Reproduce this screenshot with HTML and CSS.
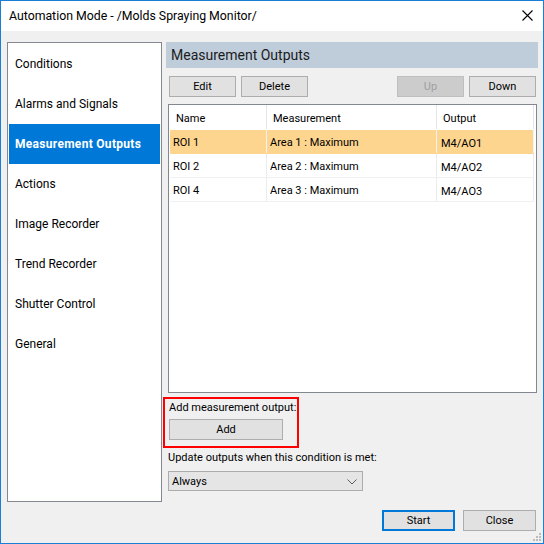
FILE: index.html
```html
<!DOCTYPE html>
<html>
<head>
<meta charset="utf-8">
<link rel="stylesheet" href="styles.css">
</head>
<body>
<div class="window">
  <div class="titlebar">
    <span class="title">Automation Mode - /Molds Spraying Monitor/</span>
    <svg class="close-x" width="11" height="11" viewBox="0 0 11 11"><path d="M0.5 0.5 L10.5 10.5 M10.5 0.5 L0.5 10.5" stroke="#000" stroke-width="1.1" fill="none"/></svg>
  </div>
  <div class="client">
    <div class="main">
      <ul class="nav">
        <li class="nav-item">Conditions</li>
        <li class="nav-item">Alarms and Signals</li>
        <li class="nav-item active">Measurement Outputs</li>
        <li class="nav-item">Actions</li>
        <li class="nav-item">Image Recorder</li>
        <li class="nav-item">Trend Recorder</li>
        <li class="nav-item">Shutter Control</li>
        <li class="nav-item">General</li>
      </ul>
      <div class="content">
        <div class="header">Measurement Outputs</div>
        <div class="toolbar">
          <button class="btn">Edit</button>
          <button class="btn">Delete</button>
          <span class="spacer"></span>
          <button class="btn disabled">Up</button>
          <button class="btn">Down</button>
        </div>
        <div class="table">
          <div class="row head">
            <div class="cell c1">Name</div>
            <div class="cell c2">Measurement</div>
            <div class="cell c3">Output</div>
          </div>
          <div class="row sel">
            <div class="cell c1">ROI 1</div>
            <div class="cell c2">Area 1 : Maximum</div>
            <div class="cell c3"><span class="out">M4/AO1</span></div>
          </div>
          <div class="row">
            <div class="cell c1">ROI 2</div>
            <div class="cell c2">Area 2 : Maximum</div>
            <div class="cell c3"><span class="out">M4/AO2</span></div>
          </div>
          <div class="row">
            <div class="cell c1">ROI 4</div>
            <div class="cell c2">Area 3 : Maximum</div>
            <div class="cell c3"><span class="out">M4/AO3</span></div>
          </div>
        </div>
        <div class="addbox">
          <div class="label">Add measurement output:</div>
          <button class="btn add">Add</button>
        </div>
        <div class="label update">Update outputs when this condition is met:</div>
        <div class="select">
          <span>Always</span>
          <svg width="10" height="6" viewBox="0 0 10 6"><path d="M0.5 0.5 L5 5 L9.5 0.5" stroke="#606060" stroke-width="1" fill="none"/></svg>
        </div>
      </div>
    </div>
    <div class="footer">
      <button class="btn fbtn primary">Start</button>
      <button class="btn fbtn">Close</button>
    </div>
  </div>
  <svg class="grip" width="9" height="9" viewBox="0 0 9 9">
    <rect x="7" y="1" width="2" height="2" fill="#bcbcbc"/>
    <rect x="4" y="4" width="2" height="2" fill="#bcbcbc"/>
    <rect x="7" y="4" width="2" height="2" fill="#bcbcbc"/>
    <rect x="1" y="7" width="2" height="2" fill="#bcbcbc"/>
    <rect x="4" y="7" width="2" height="2" fill="#bcbcbc"/>
    <rect x="7" y="7" width="2" height="2" fill="#bcbcbc"/>
  </svg>
</div>
</body>
</html>
```
FILE: styles.css
```css
* { box-sizing: border-box; }
html, body { margin: 0; padding: 0; }
body {
  width: 544px;
  height: 544px;
  font-family: Roboto, "Noto Sans", sans-serif;
  font-size: 11px;
  color: #000;
  overflow: hidden;
}
.window {
  position: relative;
  width: 544px;
  height: 544px;
  border: 1px solid #1a7fd4;
  background: #f0f0f0;
  display: flex;
  flex-direction: column;
}
.titlebar {
  height: 30px;
  background: #fff;
  display: flex;
  align-items: center;
  padding-left: 8px;
  position: relative;
}
.title {
  font-size: 12.3px;
  line-height: 16px;
}
.close-x {
  position: absolute;
  left: 521px;
  top: 9px;
}
.client {
  flex: 1;
  padding: 11px 5px 0 6px;
  display: flex;
  flex-direction: column;
}
.main {
  display: flex;
  gap: 1px;
  height: 460px;
}
.nav {
  list-style: none;
  margin: 0;
  padding: 1px;
  width: 155px;
  height: 460px;
  background: #fff;
  border: 1px solid #828790;
}
.nav-item {
  height: 40px;
  line-height: 40px;
  padding-left: 6px;
  white-space: nowrap;
  font-size: 12px;
}
.nav-item.active {
  background: #0078d7;
  color: #fff;
  font-weight: bold;
  letter-spacing: 0.3px;
}
.content {
  flex: 1;
  display: flex;
  flex-direction: column;
  align-items: flex-start;
}
.header {
  margin-left: 3px;
  align-self: stretch;
  height: 26px;
  background: #bfcddb;
  font-size: 14px;
  line-height: 26px;
  padding-left: 5px;
  color: #1b1b1b;
}
.toolbar {
  margin-top: 8px;
  margin-left: 6px;
  margin-right: 2px;
  align-self: stretch;
  display: flex;
  gap: 5px;
}
.spacer { flex: 1; }
.btn {
  font-family: inherit;
  font-size: 11px;
  color: #000;
  width: 67px;
  height: 21px;
  padding: 1px 0 0;
  background: #e1e1e1;
  border: 1px solid #adadad;
  border-radius: 0;
  line-height: 18px;
}
.btn.disabled {
  background: #cccccc;
  border-color: #bfbfbf;
  color: #a0a0a0;
}
.table {
  margin-top: 7px;
  margin-left: 5px;
  width: 369px;
  height: 289px;
  background: #fff;
  border: 1px solid #828790;
  padding: 0 1px;
}
.row {
  display: flex;
  height: 24px;
  border-bottom: 1px solid #f0f0f0;
  width: 364px;
}
.row.head {
  height: 25px;
  border-bottom: 1px solid #fff;
}
.row.sel { background: #fdd58f; border-bottom-color: #fdd58f; }
.cell {
  line-height: 23px;
  padding-top: 1px;
  padding-left: 3px;
  border-right: 1px solid #ececec;
  white-space: nowrap;
  overflow: hidden;
}
.row.sel .cell { border-right-color: #f2f2f2; }
.row.head .cell { padding-left: 6px; line-height: 25px; border-right-color: #e5e5e5; }
.c1 { width: 97px; }
.c2 { width: 170px; }
.c3 { width: 97px; padding-left: 4px; }
.row.head .c2 { padding-left: 6px; }
.row .c2 { padding-left: 3px; }
.out { position: relative; top: 1px; }
.addbox {
  margin-top: 4px;
  width: 136px;
  height: 51px;
  border: 2px solid #ff0000;
  padding: 1px 0 0 4px;
}
.label {
  line-height: 15px;
  white-space: nowrap;
}
.addbox .label { margin-left: 0; }
.btn.add {
  display: block;
  margin-top: 4px;
  width: 114px;
  height: 21px;
}
.label.update {
  margin-top: 2px;
  margin-left: 5px;
}
.select {
  margin-top: 6px;
  margin-left: 5px;
  width: 195px;
  height: 20px;
  background: #e5e5e5;
  border: 1px solid #acacac;
  display: flex;
  align-items: center;
  justify-content: space-between;
  padding: 1px 5px 0 3px;
  line-height: 17px;
}
.footer {
  margin-top: 8px;
  display: flex;
  justify-content: flex-end;
  gap: 8px;
  padding-right: 2px;
}
.fbtn {
  width: 73px;
  height: 21px;
}
.fbtn.primary {
  border: 2px solid #0078d7;
  padding-top: 1px;
  line-height: 16px;
}
.grip {
  position: absolute;
  right: 2px;
  bottom: 2px;
}
```
